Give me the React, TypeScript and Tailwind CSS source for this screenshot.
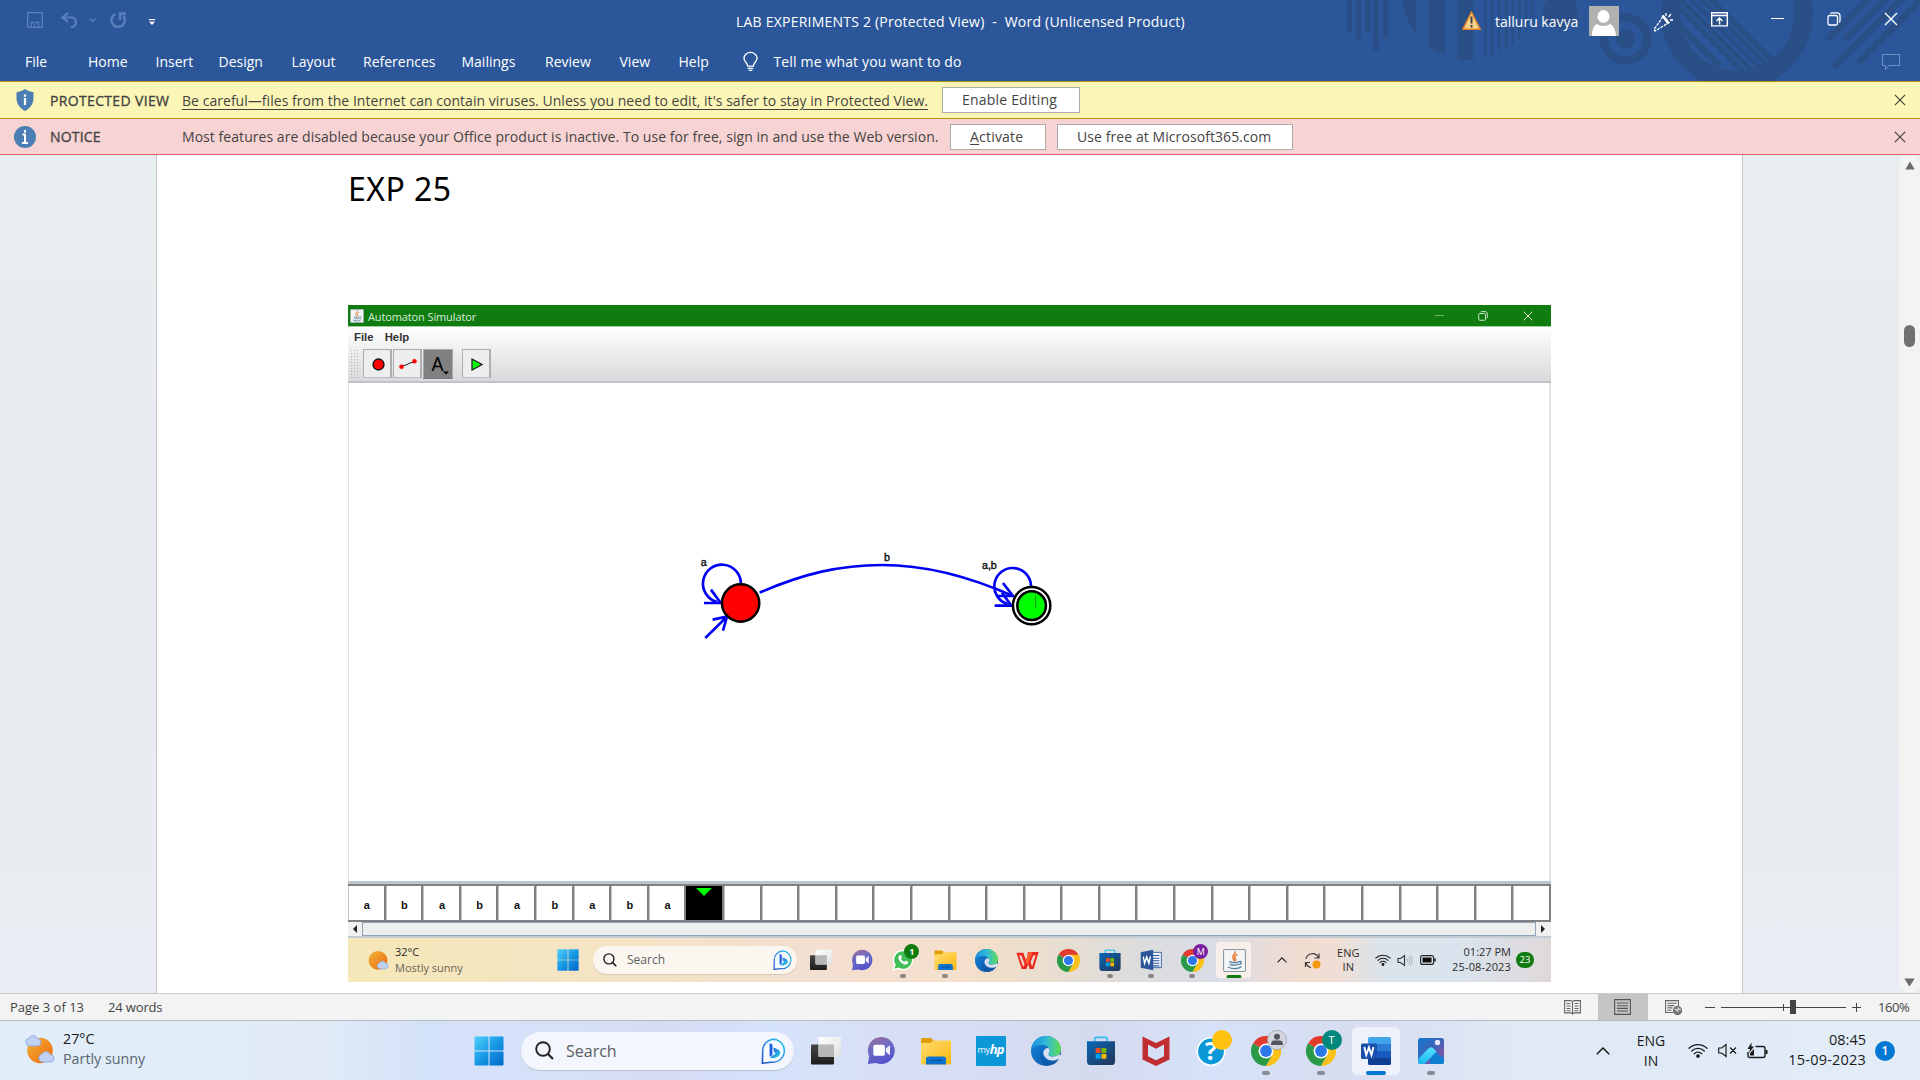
import React from 'react';

type IconProps = { className?: string };

/* ---------- taskbar icons, all on a 30 x 30 grid ---------- */

const Windows = ({ className = '' }: IconProps) => (
  <svg viewBox="0 0 30 30" className={className}>
    <defs>
      <linearGradient id="win" x1="0" y1="0" x2="1" y2="1">
        <stop offset="0" stopColor="#4fd0fb" />
        <stop offset="0.5" stopColor="#1798e5" />
        <stop offset="1" stopColor="#0067c8" />
      </linearGradient>
    </defs>
    <path fill="url(#win)" d="M.5 1.5a1 1 0 0 1 1-1h13v14H.5zM15.5.5h13a1 1 0 0 1 1 1v13h-14zM.5 15.5h14v14h-13a1 1 0 0 1-1-1zM15.5 15.5h14v13a1 1 0 0 1-1 1h-13z" />
  </svg>
);

const Bing = ({ className = '' }: IconProps) => (
  <svg viewBox="0 0 26 26" className={className}>
    <defs>
      <linearGradient id="bing" x1="1" y1="0" x2="0" y2="1">
        <stop offset="0" stopColor="#22c3ec" />
        <stop offset="0.5" stopColor="#2a8fe6" />
        <stop offset="1" stopColor="#1b49c0" />
      </linearGradient>
      <linearGradient id="bingb" x1="0" y1="0" x2="1" y2="1">
        <stop offset="0" stopColor="#1b55d8" />
        <stop offset="1" stopColor="#33d4e8" />
      </linearGradient>
    </defs>
    <path d="M13 1.2A11.6 11.6 0 1 1 10 24.2l-8.6 1 .3-12A11.6 11.6 0 0 1 13 1.2z" fill="#f4fbff" stroke="url(#bing)" strokeWidth="1.5" />
    <path d="M8.6 5.2l2.800 1.100v10.700l-2.800 1.800z" fill="#1c5be0" />
    <path d="M12.200 9.600l5 2c2.800 1.600 2.600 5.600-.2 7-2.800 1.600-6 2-8.200 1l4-2.800 2-1.200-1.600-1.200z" fill="url(#bingb)" />
  </svg>
);

const TaskView = ({ className = '' }: IconProps) => (
  <svg viewBox="0 0 30 30" className={className}>
    <defs>
      <linearGradient id="tvd" x1="0" y1="0" x2="0" y2="1">
        <stop offset="0" stopColor="#454544" />
        <stop offset="1" stopColor="#1d1d1b" />
      </linearGradient>
      <linearGradient id="tvl" x1="0" y1="0" x2="1" y2="1">
        <stop offset="0" stopColor="#ffffff" />
        <stop offset="1" stopColor="#dfe0e2" />
      </linearGradient>
    </defs>
    <rect x="0" y="8.500" width="23" height="20" rx="1" fill="url(#tvd)" />
    <rect x="7.500" y="1" width="22.500" height="20" rx="1" fill="url(#tvl)" />
    <path d="M7.500 8.500H23V21H8.500a1 1 0 0 1-1-1z" fill="#b7b7b8" />
  </svg>
);

const Chat = ({ className = '' }: IconProps) => (
  <svg viewBox="0 0 30 30" className={className}>
    <defs>
      <linearGradient id="chat" x1="0.200" y1="0" x2="0.600" y2="1">
        <stop offset="0" stopColor="#9a6d9c" />
        <stop offset="0.450" stopColor="#6a6cc6" />
        <stop offset="1" stopColor="#5350cc" />
      </linearGradient>
    </defs>
    <path d="M15.500 1a14 14 0 1 1-5.500 27L1.500 29l1.200-8A14 14 0 0 1 15.500 1z" fill="url(#chat)" />
    <rect x="7" y="9" width="12" height="11.500" rx="2" fill="#fff" />
    <path d="M20 13l3.500-3q.8-.3.800.500v8.500q0 .8-.8.500L20 16.500z" fill="#f0eefc" />
  </svg>
);

const Folder = ({ className = '' }: IconProps) => (
  <svg viewBox="0 0 30 30" className={className}>
    <defs>
      <linearGradient id="fold" x1="0" y1="0" x2="1" y2="1">
        <stop offset="0" stopColor="#ffdc70" />
        <stop offset="1" stopColor="#fdb813" />
      </linearGradient>
    </defs>
    <path d="M0 3.500Q0 2 1.500 2H10l3 2.500-3 4H0z" fill="#e19c06" />
    <path d="M0 7h9.500l2.500-2.500h18V27q0 1.500-1.500 1.500h-27Q0 28.500 0 27z" fill="url(#fold)" />
    <path d="M5 28.500V23q0-2.500 2.500-2.500h15Q25 20.500 25 23v5.500z" fill="#0c74cf" />
    <path d="M9 24.500h12" stroke="#074f96" strokeWidth="1.200" />
  </svg>
);

const Edge = ({ className = '' }: IconProps) => (
  <svg viewBox="0 0 30 30" className={className}>
    <defs>
      <linearGradient id="edgeA" x1="0" y1="0.300" x2="1" y2="0.300">
        <stop offset="0" stopColor="#1e8fdd" />
        <stop offset="0.500" stopColor="#31b9d9" />
        <stop offset="1" stopColor="#62dd53" />
      </linearGradient>
      <linearGradient id="edgeB" x1="0" y1="0" x2="1" y2="1">
        <stop offset="0" stopColor="#1287de" />
        <stop offset="1" stopColor="#0d4f9f" />
      </linearGradient>
    </defs>
    <circle cx="15" cy="15" r="15" fill="url(#edgeB)" />
    <path d="M.2 13C1.500 5 7.500 0 15 0c8.500 0 15 6 15 13 0 4.500-3.200 7.500-7.500 7.500-3.500 0-5.200-1-5.200-2.300 0-.8 1.200-1.500 1.200-3.700 0-3.500-3.500-5.500-8-5.500-4 0-8 1.500-10.300 4z" fill="url(#edgeA)" />
    <path d="M11.500 13.500c-2 6 2.500 13 9.500 12.500 3 0 6-1.500 7.500-3.200L24 28l-6 1.800c-8 0-11-9.800-6.500-16.300z" fill="#0d529f" opacity=".5" />
    <path d="M18.500 14c.3 2.800-1.300 3.200-1.200 4.200.1 1.400 1.900 2.400 5.200 2.300 2.500 0 4.500-1 6-2.500l1.500 4.500-3 .5c-5 3.500-12.500 1-14.500-4.500-.8-3 1.500-6.500 4-6.500 1.200 0 1.900.8 2 2z" fill="#d8dff1" />
  </svg>
);

const Store = ({ className = '' }: IconProps) => (
  <svg viewBox="0 0 30 30" className={className}>
    <defs>
      <linearGradient id="store" x1="0" y1="0" x2="1" y2="1">
        <stop offset="0" stopColor="#0967b5" />
        <stop offset="1" stopColor="#243457" />
      </linearGradient>
    </defs>
    <path d="M8.500 6V3q0-1.500 1.500-1.500h10q1.500 0 1.500 1.500v3" fill="none" stroke="#35bdf0" strokeWidth="1.800" />
    <path d="M.5 5.500h29V26q0 4-4 4h-21q-4 0-4-4z" fill="url(#store)" />
    <path d="M9.500 12.500h5v5h-5z" fill="#f25022" />
    <path d="M15.500 12.500h5v5h-5z" fill="#7fba00" />
    <path d="M9.500 18.500h5v5h-5z" fill="#00a4ef" />
    <path d="M15.500 18.500h5v5h-5z" fill="#ffb900" />
  </svg>
);

const Chrome = ({ className = '' }: IconProps) => (
  <svg viewBox="0 0 30 30" className={className}>
    <path d="M15 15L2 7.500A15 15 0 0 1 28 7.500z" fill="#e33b2e" />
    <path d="M15 15L2 7.500A15 15 0 0 0 15 30l6.500-11.200z" fill="#2a9a48" />
    <path d="M15 7.500h13A15 15 0 0 1 15 30l6.500-11.200z" fill="#fcc01a" />
    <circle cx="15" cy="15" r="7.500" fill="#fff" />
    <circle cx="15" cy="15" r="5.900" fill="#2c77ea" />
  </svg>
);

const McAfee = ({ className = '' }: IconProps) => (
  <svg viewBox="0 0 30 30" className={className}>
    <path d="M1.500.5L15 7 28.500.5V23.500L15 30 1.500 23.500zM7 8.500v11.800l8 3.900 8-3.900V8.500l-8 4.200z" fill="#c12e31" fillRule="evenodd" />
  </svg>
);

const HelpIcon = ({ className = '' }: IconProps) => (
  <svg viewBox="0 0 36 36" className={className}>
    <circle cx="15" cy="21.500" r="13.700" fill="#0a98d8" stroke="#fff" strokeWidth="1.600" />
    <text x="15" y="30" textAnchor="middle" fontSize="25" fontWeight="700" fill="#fff" className="font-['Open_Sans',sans-serif]">?</text>
    <circle cx="26" cy="10" r="10" fill="#ffc20e" />
  </svg>
);

const WordNew = ({ className = '' }: IconProps) => (
  <svg viewBox="0 0 30 30" className={className}>
    <path d="M7 2.500Q7 1 8.500 1h20Q30 1 30 2.500V8H7z" fill="#41a5ee" />
    <path d="M7 8h23v7H7z" fill="#2b7cd3" />
    <path d="M7 15h23v7H7z" fill="#185abd" />
    <path d="M7 22h23v5.500q0 1.500-1.500 1.500h-20Q7 29 7 27.500z" fill="#103f91" />
    <rect x="0" y="7.500" width="16" height="15.500" rx="1.500" fill="#1a4fae" />
    <path d="M3.300 11l2 8 2.600-7.500 2.600 7.500 2-8" fill="none" stroke="#fff" strokeWidth="1.900" />
  </svg>
);

const WordOld = ({ className = '' }: IconProps) => (
  <svg viewBox="0 0 30 30" className={className}>
    <rect x="14" y="4.500" width="15" height="21" fill="#f8faff" stroke="#2b579a" strokeWidth="1.200" />
    <path d="M17 9h9.500M17 12.500h9.500M17 16h9.500M17 19.500h9.500M17 23h9.500" stroke="#2b579a" strokeWidth="1.400" />
    <path d="M1 4.500L18 1v28L1 25.500z" fill="#2b579a" />
    <path d="M4.500 10.500l1.800 9 2.900-8.500 2.900 8.500 2-9.500" fill="none" stroke="#fff" strokeWidth="2" />
  </svg>
);

const Photos = ({ className = '' }: IconProps) => (
  <svg viewBox="0 0 30 30" className={className}>
    <defs>
      <linearGradient id="ph" x1="0" y1="0" x2="1" y2="1">
        <stop offset="0" stopColor="#1478cf" />
        <stop offset="0.500" stopColor="#3e62b8" />
        <stop offset="0.750" stopColor="#7a56a6" />
        <stop offset="1" stopColor="#0c7fd8" />
      </linearGradient>
      <linearGradient id="ph2" x1="0.500" y1="0" x2="0.200" y2="1">
        <stop offset="0" stopColor="#50e0fc" />
        <stop offset="1" stopColor="#1ab4f0" />
      </linearGradient>
    </defs>
    <rect x="2" y="2" width="26" height="26" rx="2.500" fill="url(#ph)" />
    <path d="M14.500 11.500L28 23v2.500q0 2.500-2.500 2.500H14z" fill="#0f7fd3" />
    <path d="M2.500 22.500L13 12q2-1.700 4 0l3.500 3.500L8.500 28h-4Q2 28 2 25.500z" fill="url(#ph2)" />
    <circle cx="21.500" cy="6.500" r="2.700" fill="#e8e6f8" />
  </svg>
);

const Whatsapp = ({ className = '' }: IconProps) => (
  <svg viewBox="0 0 30 30" className={className}>
    <path d="M15 1a14 14 0 1 1-6.500 26.400L.5 29.500l2.300-7.800A14 14 0 0 1 15 1z" fill="#fff" />
    <path d="M15 3a12 12 0 1 1-6 22.300l-5.600 1.500 1.600-5.400A12 12 0 0 1 15 3z" fill="#3fbf55" />
    <path d="M10.500 8.500c1-.5 1.800-.2 2.200.8l.8 2c.3.800-.7 1.500-1.100 2.200 1 2 2.400 3.300 4.500 4.100.8-.7 1.300-1.900 2.200-1.500l2.200 1c1 .5 1 1.700.2 2.700-1.500 1.800-4 1.700-6.200.7-3.200-1.500-5.200-3.800-6.300-6.700-.7-2.200-.2-4.200 1.500-5.300z" fill="#fff" />
  </svg>
);

const Wps = ({ className = '' }: IconProps) => (
  <svg viewBox="0 0 30 30" className={className}>
    <path d="M.5 5h9l4 11 3.500-8h-2.500L16 4h13.500L23 26h-5l-2-6-2.500 6h-6z" fill="#e9261c" />
    <path d="M4 8.500h3.200l4 11.500-1.700 3.500zM19 17l3.500-9h3.200l-4.700 15z" fill="#f5d3ca" />
    <path d="M16 20l5.500-16H17l-5.500 13z" fill="#ff5b33" />
  </svg>
);

const Java = ({ className = '' }: IconProps) => (
  <svg viewBox="0 0 30 30" className={className}>
    <rect x=".7" y=".7" width="28.600" height="28.600" rx="2" fill="#f2f4f5" stroke="#8496a6" strokeWidth="1.400" />
    <path d="M16 3c1 4-5 5-3 9 .6 1.600 2 2 1.500 4M19 7c-3 1.500-5 3-3 5.500 1 1.200.5 2-.5 3" fill="none" stroke="#e8732a" strokeWidth="1.900" />
    <path d="M8 16.500c4 1.500 9 1.500 13 .3M9 20c4 1.300 8 1.300 11 .2M21 16.500c4-1 4 3-.5 4M6.500 23.500c5 3 13 3 17.500-.5" fill="none" stroke="#52809f" strokeWidth="1.700" />
  </svg>
);

const Cloud = () => (
  <path d="M5 10.500a4 4 0 0 1-.5-7.900 4.500 4.500 0 0 1 8.300.4 3.800 3.800 0 0 1 .7 7.500z" fill="#bfd0f2" stroke="#86a3e0" strokeWidth=".8" />
);

const Weather = ({ className = '', top = false }: IconProps & { top?: boolean }) => (
  <svg viewBox="0 0 30 30" className={className}>
    <defs>
      <linearGradient id="sun" x1="0" y1="0" x2="1" y2="1">
        <stop offset="0" stopColor="#f0b43a" />
        <stop offset="1" stopColor="#f2660c" />
      </linearGradient>
    </defs>
    <circle cx="15" cy="15.500" r="12.800" fill="url(#sun)" />
    {top && <g transform="translate(-.5 .5)"><Cloud /></g>}
    <g transform="translate(12.500 16.500)"><Cloud /></g>
  </svg>
);

/* ---------- line icons ---------- */

const Wifi = ({ className = '' }: IconProps) => (
  <svg viewBox="0 0 20 15" className={className} fill="none" stroke="#1b1b1b" strokeWidth="1.300" strokeLinecap="round">
    <path d="M1 5.300a12.800 12.800 0 0 1 18 0M3.700 8a9 9 0 0 1 12.600 0M6.300 10.700a5.200 5.200 0 0 1 7.400 0" />
    <circle cx="10" cy="13" r="1.200" fill="#1b1b1b" />
  </svg>
);

const Cross = ({ className = '' }: IconProps) => (
  <svg viewBox="0 0 14 14" className={className} fill="none" stroke="currentColor" strokeWidth="1.400">
    <path d="M1 1l12 12M13 1L1 13" />
  </svg>
);

const Restore = ({ className = '' }: IconProps) => (
  <svg viewBox="0 0 14 14" className={className} fill="none" stroke="currentColor" strokeWidth="1.300">
    <rect x="1" y="3.500" width="9.500" height="9.500" rx="1.500" />
    <path d="M3.500 1.500q.5-.7 1.500-.7h5q3 0 3 3v5q0 1-.7 1.500" />
  </svg>
);

const Chevron = ({ className = '' }: IconProps) => (
  <svg viewBox="0 0 14 8" className={className} fill="none" stroke="#1b1b1b" strokeWidth="1.500">
    <path d="M.8 7.200L7 1l6.200 6.200" />
  </svg>
);

const Lens = ({ className = '' }: IconProps) => (
  <svg viewBox="0 0 19 19" className={className} fill="none" stroke="#222" strokeWidth="1.900">
    <circle cx="8" cy="8" r="6.800" />
    <path d="M12.800 12.800l5.200 5.200" strokeWidth="2.200" />
  </svg>
);

/* ---------- Word title bar ---------- */

const TitlePattern = () => (
  <svg className="absolute top-0 right-0 h-[81px] w-[580px]" viewBox="1340 0 580 81" fill="#2a4e86">
    <defs>
      <clipPath id="ball"><circle cx="1470" cy="-8" r="68" /></clipPath>
      <clipPath id="lens"><circle cx="1737" cy="13.500" r="58" /></clipPath>
    </defs>
    <path d="M1347 0h5v32h-5zM1356 0h5v41h-5zM1365 0h5v32h-5zM1373.500 0h5v52h-5zM1383 0h5.500v38h-5.500z" />
    <g clipPath="url(#ball)">
      <path d="M1400 0h16v70h-16zM1429 0h16v70h-16zM1457.500 0h16v70h-16z" />
      <path d="M1484 0h2.600v70h-2.600zM1491 0h2.600v70h-2.600zM1498 0h2.400v70h-2.400zM1505 0h2.400v70h-2.400zM1511.500 0h2.400v70h-2.400zM1518.500 0h2.200v70h-2.200zM1525 0h2.200v70h-2.200zM1531.500 0h2v70h-2z" />
    </g>
    <circle cx="1560.500" cy="11" r="17.300" />
    <circle cx="1625.700" cy="39" r="21.500" fill="none" stroke="#2a4e86" strokeWidth="8.500" />
    <circle cx="1625.700" cy="39" r="9.500" />
    <circle cx="1737" cy="13.500" r="66.500" fill="none" stroke="#2a4e86" strokeWidth="18.500" />
    <g clipPath="url(#lens)" stroke="#2a4e86" strokeWidth="5">
      <path d="M1708-4l80 80M1698-4l80 80M1688-4l80 80M1677-4l80 80M1667-4l80 80" />
      <path d="M1660 6l60 60" strokeWidth="6" />
    </g>
    <path d="M1827 40l42-42M1845 40l44-44M1833 68l72-72M1858 63l66-66" stroke="#2a4e86" strokeWidth="6.500" />
  </svg>
);

const MENU: [string, string][] = [
  ['File', 'w-[63px]'], ['Home', 'w-[67.5px]'], ['Insert', 'w-[63px]'], ['Design', 'w-[73px]'],
  ['Layout', 'w-[71.5px]'], ['References', 'w-[98.5px]'], ['Mailings', 'w-[83.5px]'],
  ['Review', 'w-[74.5px]'], ['View', 'w-[59px]'], ['Help', 'w-[64px]'],
];

const WordHeader = () => (
  <header className="relative h-[81px] shrink-0 bg-[#2b579a] text-[14px] text-white">
    <TitlePattern />
    <div className="relative flex h-[43px]">
      <div className="flex w-[736px] shrink-0 items-start pl-[27px] pt-3">
        <svg className="h-4 w-4" viewBox="0 0 16 16" fill="none" stroke="#5b7fba" strokeWidth="1.300">
          <path d="M.7.700h14.600v14.600H.7zM4.500 15v-4.500h7V15M7.500 12.500V15" />
        </svg>
        <svg className="ml-[18px] h-4 w-[19px]" viewBox="0 0 19 16" fill="none" stroke="#5b7fba" strokeWidth="2.200">
          <path d="M7 1L1.500 5.500 7 10M2 5.500h9.500a5 5 0 0 1 0 9.500H10" />
        </svg>
        <svg className="ml-[9px] mt-[6px] h-[5px] w-[7px]" viewBox="0 0 7 5" fill="none" stroke="#5b7fba" strokeWidth="1.200"><path d="M.5.500l3 3 3-3" /></svg>
        <svg className="ml-[14px] h-4 w-[17px]" viewBox="0 0 17 16" fill="none" stroke="#5b7fba" strokeWidth="2.400">
          <path d="M5.500 2A6.700 6.700 0 1 0 13 3.500M10 8V1.500h6" />
        </svg>
        <svg className="ml-[22px] mt-[7px] h-[6px] w-[6px]" viewBox="0 0 6 6" fill="#fff"><path d="M0 0h6v1.200H0zM0 2.800h6L3 6z" /></svg>
      </div>
      <div className="w-[720px] shrink-0 whitespace-pre pt-[12px] leading-[20px] tracking-[0.22px]">LAB EXPERIMENTS 2 (Protected View)  -  Word (Unlicensed Product)</div>
      <svg className="ml-[6px] mt-[11px] h-[19px] w-[19px]" viewBox="0 0 19 19">
        <path d="M9.500 1L18.200 18.300H.8z" fill="#fbd68a" stroke="#e0832a" strokeWidth="1.500" />
        <path d="M9.500 5.500v7M9.500 14v2.500" stroke="#3c3c3c" strokeWidth="2" />
      </svg>
      <span className="ml-[14px] w-[94px] whitespace-nowrap pt-[12px] leading-[20px]">talluru kavya</span>
      <svg className="mt-[6px] h-[30px] w-[30px]" viewBox="0 0 30 30">
        <path fill="#b1b1b1" d="M0 0h30v30H0z" />
        <ellipse cx="14.500" cy="10.500" rx="6" ry="6.500" fill="#fff" />
        <path d="M3 30q0-10 5-12 2.500 2 6.500 2t6.500-2q5 2 6 12z" fill="#fff" />
      </svg>
      <svg className="ml-[34px] mt-3 h-5 w-5" viewBox="0 0 20 20" fill="none" stroke="#fff" strokeWidth="1.300">
        <path d="M10 4.500L1 17.500 2 19l12.500-7.500z" strokeDasharray="3 1" /><path d="M9.500 3.500l6.500 8" strokeWidth="2.500" /><path d="M13 1v3M18 2l-2.500 3M17 8h3" />
      </svg>
      <svg className="ml-[38px] mt-3 h-[15px] w-[17px]" viewBox="0 0 17 15" fill="none" stroke="#fff" strokeWidth="1.400">
        <path d="M.7.700h15.600v13.200H.7zM.7 3.500h15.600M8.500 12.500V6M5.500 9l3-3 3 3" />
      </svg>
      <div className="ml-[43px] mt-[18px] h-px w-[13px] bg-white" />
      <Restore className="ml-[43px] mt-3 h-[14px] w-[14px]" />
      <Cross className="ml-[43px] mt-3 h-[14px] w-[14px]" />
    </div>
    <nav className="relative flex h-[38px] pl-[25px] leading-[38px]">
      {MENU.map(([t, w]) => <span key={t} className={`${w} shrink-0`}>{t}</span>)}
      <svg className="mt-2 h-[21px] w-[15px]" viewBox="0 0 16 21" fill="none" stroke="#fff" strokeWidth="1.400">
        <path d="M5 15.500c0-3.500-4-4.500-4-8.700A6.800 6.800 0 0 1 8 .8a6.800 6.800 0 0 1 7 6c0 4.200-4 5.200-4 8.700zM5 17.800h6M6 20h4" />
      </svg>
      <span className="ml-4 tracking-[0.15px]">Tell me what you want to do</span>
      <svg className="ml-auto mr-5 mt-[10px] h-[18px] w-[18px]" viewBox="0 0 18 18" fill="none" stroke="#6f91c6"><path d="M.5 1.500h17v11H7l-3.500 4v-4h-3z" /></svg>
    </nav>
  </header>
);

const BarButton = ({ children, className }: { children: React.ReactNode; className: string }) => (
  <button className={`${className} h-[26px] shrink-0 border border-[#ababab] bg-white text-left leading-[24px]`}>{children}</button>
);

const NoticeBars = () => (
  <div className="shrink-0 text-[14px] text-[#444]">
    <div className="flex h-[38px] items-center border-y border-[#b5910e] bg-[#fcf6b6] pl-[14px] pr-[14px]">
      <svg className="h-[22px] w-[22px]" viewBox="0 0 22 22">
        <path d="M11 0q4 3 8.500 3.300V9c0 6-3.500 10.500-8.500 13C6 19.500 2.500 15 2.500 9V3.300Q7 3 11 0z" fill="#4a7eb5" />
        <path d="M11 5.500v2.300M11 9v7" stroke="#fff" strokeWidth="2.200" />
      </svg>
      <span className="ml-[14px] w-[132px] shrink-0 whitespace-nowrap tracking-[0.34px] [-webkit-text-stroke:0.35px_#444]">PROTECTED VIEW</span>
      <span className="w-[760px] shrink-0 whitespace-nowrap tracking-[0.038px] underline underline-offset-[3px]">Be careful—files from the Internet can contain viruses. Unless you need to edit, it's safer to stay in Protected View.</span>
      <BarButton className="w-[138px] pl-[19px] tracking-[0.2px]">Enable Editing</BarButton>
      <Cross className="ml-auto h-3 w-3" />
    </div>
    <div className="flex h-[36px] items-center border-b border-[#e0606a] bg-[#f8d3d3] pl-[14px] pr-[14px]">
      <svg className="h-[22px] w-[22px]" viewBox="0 0 22 22">
        <circle cx="11" cy="11" r="11" fill="#4a7eb5" />
        <path d="M11 4v2.800M11 8v9M8.500 8.500H11M8 17h6" stroke="#fff" strokeWidth="2" />
      </svg>
      <span className="ml-[14px] w-[132px] shrink-0 tracking-[0.2px] [-webkit-text-stroke:0.35px_#444]">NOTICE</span>
      <span className="w-[768px] shrink-0 whitespace-nowrap tracking-[0.053px]">Most features are disabled because your Office product is inactive. To use for free, sign in and use the Web version.</span>
      <BarButton className="w-[96px] pl-[19px] tracking-[0.200px]"><u className="underline-offset-2">A</u>ctivate</BarButton>
      <BarButton className="ml-[11px] w-[236px] pl-[19px] tracking-[0.08px]">Use free at Microsoft365.com</BarButton>
      <Cross className="ml-auto h-3 w-3" />
    </div>
  </div>
);

/* ---------- Automaton simulator, shown inside the document ---------- */

const Diagram = () => (
  <svg className="h-full w-full" viewBox="349 383 1200 498">
    <g transform="translate(660.300 530.300) scale(.33333)" fill="none" stroke="#0000f5" strokeWidth="8">
      <path d="M242 160A57 57 0 1 0 170 215" />
      <path d="M131 218h50L152 178" />
      <path d="M135 323l65-64M157 268l43-9-12 42" />
      <path d="M298 187C430 130 540 104 665 104C800 104 930 140 1058 197" />
      <path d="M1028 158l30 39h-50" />
      <path d="M1112 168A55 55 0 1 0 1042 221" />
      <path d="M1003 226h50L1025 187" />
      <circle cx="241" cy="218" r="56" fill="#f00" stroke="#000" strokeWidth="7.500" />
      <circle cx="1114" cy="226" r="56" fill="#fff" stroke="#000" strokeWidth="7.500" />
      <circle cx="1114" cy="226" r="43" fill="#0f0" stroke="#000" strokeWidth="7.500" />
      <path d="M1126 195v38" stroke="#087a08" strokeWidth="2.500" />
      <g fill="#111" stroke="#111" strokeWidth="1.200" fontSize="32" className="font-['Liberation_Sans',sans-serif]">
        <text x="121" y="108">a</text>
        <text x="671" y="92">b</text>
        <text x="965" y="115">a,b</text>
      </g>
    </g>
  </svg>
);

const TAPE = ['a', 'b', 'a', 'b', 'a', 'b', 'a', 'b', 'a'];

const Tape = () => (
  <div className="grid h-[38px] shrink-0 grid-cols-[repeat(32,minmax(0,1fr))] border-y-2 border-[#808080] bg-[#808080]">
    {Array.from({ length: 32 }, (_, i) => (
      <div
        key={i}
        className={
          i === 9
            ? 'flex justify-center border-r-2 border-[#808080] bg-black pt-[2px]'
            : 'flex items-center justify-center border-r-2 border-[#808080] bg-white pl-[2px] pt-[5px] font-["Liberation_Sans",sans-serif] text-[11px] font-bold leading-none text-[#111] shadow-[inset_1px_0_#c4c4c4]'
        }
      >
        {i === 9 ? <svg className="h-2 w-4" viewBox="0 0 16 8"><path d="M0 0h16L8 8z" fill="#0f0" /></svg> : TAPE[i]}
      </div>
    ))}
  </div>
);

const ToolButton = ({ active = false, children }: { active?: boolean; children: React.ReactNode }) => (
  <div className={active
    ? 'flex h-[30px] w-[30px] items-center justify-center border border-[#aaa] border-b-[#777] bg-[#808080]'
    : 'flex h-[29px] w-[29px] items-center justify-center border border-r-2 border-[#aeaeae] border-b-[#bbb] bg-[#eeeeee]'}>
    {children}
  </div>
);

const Dot = ({ className = '' }: IconProps) => <div className={`${className} absolute bottom-0 left-1/2 -translate-x-1/2 rounded-full`} />;

const InnerApp = ({ children, run = false, active = false }: { children: React.ReactNode; run?: boolean; active?: boolean }) => (
  <div className="relative flex h-[36px] w-[41.3px] shrink-0 items-center justify-center">
    {active && <div className="absolute inset-x-[3px] inset-y-0 rounded bg-[#f8efea]" />}
    <div className="relative h-[22px] w-[22px]">{children}</div>
    {run && <Dot className="h-[4px] w-[6px] bg-[#8a8580]" />}
    {active && <Dot className="h-[3px] w-[15px] bg-[#107c10]" />}
  </div>
);

const InnerTaskbar = () => (
  <div className="flex h-[44px] shrink-0 items-center bg-[linear-gradient(90deg,#f5e7b8_0%,#f4e4c5_22%,#f3dfd0_38%,#f5dfcd_50%,#f0dfc9_54%,#dcdcdd_66%,#d9dde6_72%,#f1dcd1_79%,#f1ddd3_82%,#dbe4ea_86%,#dae4ee_92%,#dfd8da_100%)] text-[11px] text-[#2b2b2b]">
    <Weather className="ml-[19px] h-[22px] w-[22px]" />
    <div className="ml-[6px] w-[162px] -mt-[1px] leading-[15.5px]">
      <div>32°C</div>
      <div className="text-[#6b6353]">Mostly sunny</div>
    </div>
    <Windows className="h-[22px] w-[22px]" />
    <div className="ml-[14px] flex h-7 w-[204px] items-center rounded-full bg-[#fbf6f0] pl-[10px] pr-[4px] shadow-[0_1px_1px_#d8c9b4]">
      <Lens className="h-[14px] w-[14px]" />
      <span className="ml-[10px] text-[12px] text-[#5f5f5f]">Search</span>
      <Bing className="ml-auto h-[20px] w-[20px]" />
    </div>
    <div className="ml-[3px] flex">
      <InnerApp><TaskView className="h-[22px] w-[22px]" /></InnerApp>
      <InnerApp><Chat className="h-[22px] w-[22px]" /></InnerApp>
      <InnerApp run>
        <Whatsapp className="h-[22px] w-[22px]" />
        <span className="absolute -right-[5px] -top-[5px] h-[15px] w-[15px] rounded-full bg-[#107c10] text-center text-[9px] font-bold leading-[15px] text-white">1</span>
      </InnerApp>
      <InnerApp run><Folder className="h-[22px] w-[23px]" /></InnerApp>
      <InnerApp><Edge className="h-[23px] w-[23px]" /></InnerApp>
      <InnerApp><Wps className="h-[23px] w-[23px]" /></InnerApp>
      <InnerApp><Chrome className="h-[23px] w-[23px]" /></InnerApp>
      <InnerApp run><Store className="h-[22px] w-[22px]" /></InnerApp>
      <InnerApp run><WordOld className="h-[22px] w-[22px]" /></InnerApp>
      <InnerApp run>
        <Chrome className="h-[23px] w-[23px]" />
        <span className="absolute -right-[5px] -top-[5px] h-[15px] w-[15px] rounded-full bg-[#7b1fa2] text-center text-[9px] leading-[15px] text-white">M</span>
      </InnerApp>
      <InnerApp active><Java className="h-[23px] w-[23px]" /></InnerApp>
    </div>
    <Chevron className="ml-[23px] h-[6px] w-[10px]" />
    <svg className="ml-[17px] h-[17px] w-[17px]" viewBox="0 0 17 17" fill="none" stroke="#3a3a3a" strokeWidth="1.200">
      <path d="M2 7a6.500 6.500 0 0 1 12.500-1M15 1.500V6h-4.500M7 15.500A6.500 6.500 0 0 1 2 11M1.500 15v-4.500H6" />
      <circle cx="12.500" cy="12.500" r="4" fill="#f7960f" stroke="none" />
    </svg>
    <div className="ml-[14px] w-[26px] text-center leading-[14.5px]"><div>ENG</div><div>IN</div></div>
    <Wifi className="ml-[14px] h-[12px] w-[16px]" />
    <svg className="ml-[6px] h-[13px] w-[16px]" viewBox="0 0 16 13" fill="none" stroke="#333" strokeWidth="1.100">
      <path d="M1 4.500h2.500L7.500 1.500v10L3.500 8.500H1z" /><path d="M9.500 4.500q1.500 2 0 4M11.500 3q2.500 3.500 0 7M13.500 1.500q3.300 5 0 10" stroke="#aeb4ba" />
    </svg>
    <svg className="ml-[7px] h-[10px] w-[16px]" viewBox="0 0 16 10"><rect x=".6" y=".6" width="13" height="8.800" rx="2" fill="none" stroke="#222" strokeWidth="1.100" /><path d="M2.500 2.500h9v5h-9zM14.200 3.500h1.500v3h-1.500z" fill="#111" /></svg>
    <div className="-mt-[2px] ml-auto text-right leading-[15.500px]"><div>01:27 PM</div><div className="tracking-[0.150px]">25-08-2023</div></div>
    <span className="ml-[5px] mr-[17px] h-4 w-[18px] rounded-full bg-[#107c10] text-center text-[9.500px] leading-[16px] text-white">23</span>
  </div>
);

const Simulator = () => (
  <section className="flex h-[677px] w-[1203px] flex-col">
    <div className="flex h-[21px] shrink-0 items-center bg-[#107c10] text-[11px] text-[#d9ecd9]">
      <Java className="ml-[2px] h-[14px] w-[14px]" />
      <span className="ml-1 pt-[2px] leading-[19px] tracking-[-0.12px]">Automaton Simulator</span>
      <div className="ml-auto h-px w-[9px] bg-[#6fb06f]" />
      <Restore className="ml-[34px] h-[10px] w-[10px]" />
      <Cross className="ml-[35px] mr-[18px] h-[10px] w-[10px]" />
    </div>
    <div className="h-[57px] shrink-0 border-b-2 border-[#bcc3ca] border-t border-t-[#9fce9f] bg-[linear-gradient(180deg,#ffffff,#d9d9d9)]">
      <div className="flex h-[20px] gap-[11px] pl-[6px] font-['Liberation_Sans',sans-serif] text-[11.400px] font-bold leading-[20px] text-[#333]">
        <span>File</span><span>Help</span>
      </div>
      <div className="flex h-[33px] items-center pl-[2px]">
        <div className="h-[30px] w-[10px] bg-[radial-gradient(#b5b5b5_0.8px,transparent_1px)] bg-[size:3px_3px]" />
        <div className="ml-[3px] flex items-center gap-[1px]">
          <ToolButton><svg className="ml-[2px] mt-px h-[13px] w-[13px]" viewBox="0 0 13 13"><circle cx="6.500" cy="6.500" r="5.500" fill="#f00" stroke="#111" strokeWidth="1.300" /></svg></ToolButton>
          <ToolButton><svg className="ml-[2px] mt-px h-[12px] w-[18px]" viewBox="0 0 18 12"><path d="M2 9l14-6" stroke="#222" /><circle cx="2.500" cy="8.800" r="2.300" fill="#f00" /><circle cx="15.500" cy="3.200" r="2.300" fill="#f00" /></svg></ToolButton>
          <ToolButton active>
            <svg className="ml-[2px] mt-px h-[21px] w-[19px]" viewBox="0 0 19 21">
              <text x="7.500" y="16.500" textAnchor="middle" fontSize="20" textLength="12" lengthAdjust="spacingAndGlyphs" fill="#000" className="font-['Liberation_Sans',sans-serif]">A</text>
              <path d="M13 17.500h6l-3 3z" />
            </svg>
          </ToolButton>
        </div>
        <div className="ml-[9px]">
          <ToolButton><svg className="ml-[2px] mt-px h-[13px] w-[12px]" viewBox="0 0 12 13"><path d="M1 1l10 5.500L1 12z" fill="#0f0" stroke="#222" strokeWidth="1.300" /></svg></ToolButton>
        </div>
      </div>
    </div>
    <div className="h-[498px] shrink-0 border-l border-r-2 border-[#dfe3e6] bg-white"><Diagram /></div>
    <div className="h-[3px] shrink-0 bg-[#bcc6cf]" />
    <Tape />
    <div className="flex h-[16px] shrink-0 border-b-2 border-b-[#c3cbd2] bg-[#f1f1f1]">
      <svg className="mx-[5px] mt-[3px] h-[8px] w-[4px]" viewBox="0 0 4 8"><path d="M4 0v8L0 4z" fill="#222" /></svg>
      <div className="flex-1 border border-[#8fa3bb] bg-[#eee]" />
      <svg className="ml-[5px] mr-[6px] mt-[3px] h-[8px] w-[4px]" viewBox="0 0 4 8"><path d="M0 0v8l4-4z" fill="#222" /></svg>
    </div>
    <InnerTaskbar />
  </section>
);

const DocumentArea = () => (
  <main className="flex h-[838px] shrink-0 bg-[linear-gradient(180deg,#e8edf0,#e9ecf2)]">
    <div className="ml-[156px] h-full w-[1587px] overflow-hidden border-x border-[#c6c6c6] bg-white pl-[191px]">
      <h1 className="h-[150px] pt-[11px] font-['Noto_Sans',sans-serif] text-[32px] leading-[46px] tracking-[0.45px] text-black">EXP 25</h1>
      <Simulator />
    </div>
    <div className="ml-auto flex w-[21px] flex-col items-center rounded-full bg-[#f3f3f3]">
      <svg className="mt-[6px] h-[9px] w-[10px]" viewBox="0 0 10 9"><path d="M5 .5L9.700 8.500H.3z" fill="#6b6b6b" /></svg>
      <div className="mt-[155px] h-[22px] w-[11px] rounded-full bg-[#707070]" />
      <svg className="mb-[6px] mt-auto h-[9px] w-[11px]" viewBox="0 0 11 9"><path d="M.3.500h10.400L5.500 8.500z" fill="#6b6b6b" /></svg>
    </div>
  </main>
);

const StatusBar = () => (
  <footer className="flex h-[28px] shrink-0 items-center border-b border-t border-b-[#b4bac2] border-t-[#c8c8c8] bg-[#f3f3f3] text-[13px] text-[#444]">
    <span className="ml-[10px] w-[98px] pt-[2px]">Page 3 of 13</span>
    <span className="pt-[2px] tracking-[-0.15px]">24 words</span>
    <svg className="ml-auto h-[15px] w-[17px]" viewBox="0 0 17 15" fill="none" stroke="#666" strokeWidth="1.100">
      <path d="M.6.600h6.400l1.500 1 1.500-1h6.400v12.300h-6.400L8.500 14 7 12.900H.6zM8.500 1.500V14M2.500 3.500h4M2.500 6h4M2.500 8.500h4M2.500 10.800h4M10.500 3.500h4M10.500 6h4M10.500 8.500h4M10.500 10.800h4" />
    </svg>
    <div className="ml-[17px] flex h-[26px] w-[50px] items-center justify-center bg-[#c5c5c5]">
      <svg className="mr-px h-[16px] w-[17px]" viewBox="0 0 17 16" fill="none" stroke="#555" strokeWidth="1.100"><path d="M.6.600h15.800v14.800H.6zM3 4h11M3 6.700h11M3 9.400h11M3 12h11" /></svg>
    </div>
    <svg className="ml-[17px] h-[15px] w-[17px]" viewBox="0 0 17 15" fill="none" stroke="#666" strokeWidth="1.100">
      <path d="M8 12.500H.6V.6h12.800V6M2.500 3.300h9M2.500 5.600h7M2.500 7.900h5M2.500 10.200h4" />
      <circle cx="12.500" cy="10.500" r="4" fill="#777" /><path d="M9.500 9.500l3 .5.500 2M13 7.500l.5 1.500 2.500.5" stroke="#f3f3f3" />
    </svg>
    <div className="ml-[23px] h-px w-[10px] bg-[#444]" />
    <div className="ml-[6px] flex h-[14px] w-[125px] items-center bg-[linear-gradient(#444,#444)] bg-[length:100%_1px] bg-center bg-no-repeat">
      <div className="ml-[62px] h-[7px] w-px bg-[#444]" />
      <div className="ml-[6px] h-[14px] w-[6px] bg-[#444]" />
    </div>
    <svg className="ml-[6px] h-[9px] w-[9px]" viewBox="0 0 9 9" stroke="#444"><path d="M4.500 0v9M0 4.500h9" /></svg>
    <span className="ml-[17px] mr-[11px] w-[31px] whitespace-nowrap pt-[2px] tracking-[-0.400px]">160%</span>
  </footer>
);

const TaskApp = ({ children, run = false, active = false }: { children: React.ReactNode; run?: boolean; active?: boolean }) => (
  <div className="relative flex h-[48px] w-[55px] shrink-0 items-center justify-center">
    {active && <div className="absolute inset-x-[3.500px] inset-y-0 rounded-md bg-[#eef1fb]" />}
    <div className="relative h-[30px] w-[30px]">{children}</div>
    {run && <Dot className="h-[4px] w-[8px] bg-[#878b96]" />}
    {active && <Dot className="h-[4px] w-[20px] bg-[#0078d4]" />}
  </div>
);

const Taskbar = () => (
  <div className="flex h-[59px] shrink-0 items-center bg-[linear-gradient(90deg,#e1edf8_0%,#e0ebf7_17%,#d4e2f9_22%,#d6e1f8_30%,#d6dbf4_34%,#d5e3fa_40%,#d8def4_48%,#d5daee_57%,#d6e2f9_63%,#d7ddf0_70%,#dfe8f5_78%,#e2edf8_100%)] text-[#1b1b1b]">
    <Weather top className="-mt-[2px] ml-[25px] h-[30px] w-[30px]" />
    <div className="-mt-[3px] ml-[8px] w-[411px] text-[14.300px] leading-[20px]">
      <div>27°C</div>
      <div className="text-[#5b6470]">Partly sunny</div>
    </div>
    <Windows className="h-[30px] w-[30px]" />
    <div className="ml-[17px] flex h-[38px] w-[273px] shrink-0 items-center rounded-full bg-[#f3f6fd] pl-[14px] pr-[7px] shadow-[0_1px_1px_#b9c1d4]">
      <Lens className="h-[19px] w-[19px]" />
      <span className="ml-[12px] text-[16px] text-[#5a5d63]">Search</span>
      <Bing className="ml-auto h-[26px] w-[26px]" />
    </div>
    <div className="ml-[4px] flex">
      <TaskApp><TaskView className="h-[30px] w-[30px]" /></TaskApp>
      <TaskApp><Chat className="h-[29px] w-[30px]" /></TaskApp>
      <TaskApp><Folder className="h-[30px] w-[30px]" /></TaskApp>
      <TaskApp>
        <div className="flex h-[30px] w-[30px] items-center justify-center rounded-[1px] bg-[#0a98d8] pb-[2px] text-[9px] leading-none tracking-[-0.300px] text-white">my<i className="text-[13px] font-bold tracking-[-0.8px]">hp</i></div>
      </TaskApp>
      <TaskApp><Edge className="h-[30px] w-[30px]" /></TaskApp>
      <TaskApp><Store className="h-[29px] w-[30px]" /></TaskApp>
      <TaskApp><McAfee className="h-[30px] w-[30px]" /></TaskApp>
      <TaskApp><HelpIcon className="absolute -top-[6px] left-0 h-[36px] w-[36px]" /></TaskApp>
      <TaskApp run>
        <Chrome className="h-[30px] w-[30px]" />
        <svg className="absolute -right-[6px] -top-[6px] h-5 w-5" viewBox="0 0 20 20"><circle cx="10" cy="10" r="9.600" fill="#d3d6dc" stroke="#a0a4ac" strokeWidth=".8" /><circle cx="10" cy="6.800" r="3" fill="#50565f" /><path d="M4 15q0-4.500 3-4.500h6q3 0 3 4.500z" fill="#50565f" /></svg>
      </TaskApp>
      <TaskApp run>
        <Chrome className="h-[30px] w-[30px]" />
        <span className="absolute -right-[6px] -top-[6px] h-5 w-5 rounded-full bg-[#00897b] text-center text-[11px] leading-[20px] text-white">T</span>
      </TaskApp>
      <TaskApp active><WordNew className="h-[30px] w-[30px]" /></TaskApp>
      <TaskApp run><Photos className="h-[30px] w-[30px]" /></TaskApp>
    </div>
    <div className="ml-auto flex items-center">
      <Chevron className="h-[8px] w-[14px]" />
      <div className="ml-[26px] w-[30px] text-center text-[14px] leading-[20px]"><div>ENG</div><div>IN</div></div>
      <Wifi className="ml-[22px] h-[15px] w-[20px]" />
      <svg className="ml-[10px] h-[15px] w-[19px]" viewBox="0 0 19 15" fill="none" stroke="#1b1b1b" strokeWidth="1.200"><path d="M.7 5h3L8 1.500v12L3.700 10h-3zM12 4.500l6 6M18 4.500l-6 6" /></svg>
      <svg className="ml-[10px] h-[17px] w-[21px]" viewBox="0 0 21 17" fill="none" stroke="#1b1b1b" strokeWidth="1.400"><path d="M8.500 4.500H16q2 0 2 2v7q0 2-2 2H3q-2 0-2-2V10" /><path d="M4.500.5L.5 7h2.500L2 11l5-6.500H4.500zM3 13.500V11l4-4v6.500z" fill="#1b1b1b" stroke="none" /><path d="M19.500 8v4" strokeWidth="2" /></svg>
      <div className="-mt-[2px] w-[98px] text-right text-[14.500px] leading-[20px]"><div>08:45</div><div className="tracking-[0.200px]">15-09-2023</div></div>
      <span className="ml-[9px] mr-[25px] h-5 w-5 rounded-full bg-[#0078d4] text-center text-[12px] font-semibold leading-[20px] text-white">1</span>
    </div>
  </div>
);

export default function App() {
  return (
    <div className="flex h-[1080px] w-[1920px] flex-col overflow-hidden font-['Open_Sans',sans-serif]">
      <WordHeader />
      <NoticeBars />
      <DocumentArea />
      <StatusBar />
      <Taskbar />
    </div>
  );
}
